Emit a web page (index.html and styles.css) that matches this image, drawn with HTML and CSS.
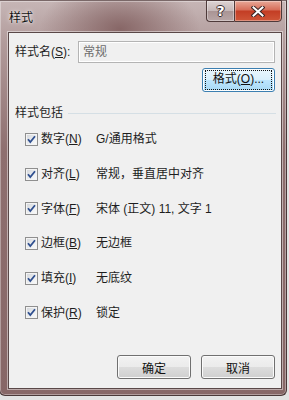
FILE: index.html
```html
<!DOCTYPE html>
<html lang="zh-CN">
<head>
    <meta charset="UTF-8">
    <meta name="viewport" content="width=device-width, initial-scale=1.0">
    <title>样式</title>
    <link rel="stylesheet" href="styles.css">
</head>
<body>
    <div class="window">
        <div class="titlebar">
            <span class="title">样式</span>
            <div class="caption">
                <span class="cap-btn help">?</span>
                <span class="cap-btn close">
                    <svg width="14" height="11" viewBox="0 0 14 11">
                        <path d="M2.5 1.5 L11.5 9.5 M11.5 1.5 L2.5 9.5" stroke="#3a2626" stroke-width="4" stroke-linecap="square"/>
                        <path d="M2.5 1.5 L11.5 9.5 M11.5 1.5 L2.5 9.5" stroke="#fff" stroke-width="2" stroke-linecap="square"/>
                    </svg>
                </span>
            </div>
        </div>
        <div class="client">
            <div class="name-row">
                <span class="name-label">样式名(<u>S</u>):</span>
                <div class="name-input">常规</div>
            </div>
            <div class="format-row">
                <button class="button focused"><span class="focus-ring">格式(<u>O</u>)...</span></button>
            </div>
            <div class="group-head">
                <span>样式包括</span>
                <span class="rule"></span>
            </div>
            <ul class="items">
                <li class="item">
                    <span class="check"><svg width="11" height="11" viewBox="0 0 11 11"><path d="M2 5.2 L4.3 8 L9 2.3" fill="none" stroke="#2f4f8f" stroke-width="1.8"/></svg></span>
                    <span class="item-name">数字(<u>N</u>)</span>
                    <span class="item-value">G/通用格式</span>
                </li>
                <li class="item">
                    <span class="check"><svg width="11" height="11" viewBox="0 0 11 11"><path d="M2 5.2 L4.3 8 L9 2.3" fill="none" stroke="#2f4f8f" stroke-width="1.8"/></svg></span>
                    <span class="item-name">对齐(<u>L</u>)</span>
                    <span class="item-value">常规，垂直居中对齐</span>
                </li>
                <li class="item">
                    <span class="check"><svg width="11" height="11" viewBox="0 0 11 11"><path d="M2 5.2 L4.3 8 L9 2.3" fill="none" stroke="#2f4f8f" stroke-width="1.8"/></svg></span>
                    <span class="item-name">字体(<u>F</u>)</span>
                    <span class="item-value">宋体 (正文) 11, 文字 1</span>
                </li>
                <li class="item">
                    <span class="check"><svg width="11" height="11" viewBox="0 0 11 11"><path d="M2 5.2 L4.3 8 L9 2.3" fill="none" stroke="#2f4f8f" stroke-width="1.8"/></svg></span>
                    <span class="item-name">边框(<u>B</u>)</span>
                    <span class="item-value">无边框</span>
                </li>
                <li class="item">
                    <span class="check"><svg width="11" height="11" viewBox="0 0 11 11"><path d="M2 5.2 L4.3 8 L9 2.3" fill="none" stroke="#2f4f8f" stroke-width="1.8"/></svg></span>
                    <span class="item-name">填充(<u>I</u>)</span>
                    <span class="item-value">无底纹</span>
                </li>
                <li class="item">
                    <span class="check"><svg width="11" height="11" viewBox="0 0 11 11"><path d="M2 5.2 L4.3 8 L9 2.3" fill="none" stroke="#2f4f8f" stroke-width="1.8"/></svg></span>
                    <span class="item-name">保护(<u>R</u>)</span>
                    <span class="item-value">锁定</span>
                </li>
            </ul>
            <div class="actions">
                <button class="button">确定</button>
                <button class="button">取消</button>
            </div>
        </div>
    </div>
</body>
</html>
```

FILE: styles.css
```css
body {
    margin: 0;
    background: #e2e2e2;
    font-family: "Liberation Sans", "Noto Sans CJK SC", sans-serif;
    font-size: 12px;
    line-height: 16px;
    color: #1e1e1e;
    overflow: hidden;
}
.window {
    margin-left: -1px;
    width: 286px;
    height: 394px;
    border: 1px solid #4a3838;
    border-top-color: #7a6868;
    border-radius: 0 0 6px 6px;
    background:
        radial-gradient(ellipse 80px 50px at 120px 28px, rgba(130, 96, 96, 0.9) 0%, rgba(130, 96, 96, 0) 100%),
        linear-gradient(to bottom, #c6b6b6 0, #b29c9c 40px, #8e6f6f 150px, #876767 100%);
    box-shadow: inset 0 0 0 1px rgba(255, 255, 255, 0.35);
    display: flex;
    flex-direction: column;
}
.titlebar {
    height: 31px;
    display: flex;
    align-items: flex-start;
    justify-content: space-between;
}
.title {
    padding: 9px 0 0 9px;
    color: #111;
    text-shadow: 0 0 5px rgba(255, 255, 255, 0.9), 0 0 2px rgba(255, 255, 255, 0.8);
}
.caption {
    display: flex;
    margin-top: -1px;
    margin-right: 4px;
}
.cap-btn {
    height: 22px;
    box-sizing: border-box;
    border: 1px solid #4e3a3a;
    display: flex;
    align-items: center;
    justify-content: center;
    box-shadow: inset 0 0 0 1px rgba(255, 255, 255, 0.35);
}
.help {
    width: 28px;
    border-right: none;
    border-radius: 0 0 0 4px;
    background: linear-gradient(to bottom, #ddd3d3 0, #c4b6b6 50%, #a99494 50%, #b8a6a6 100%);
    color: #fff;
    font-weight: bold;
    font-size: 14px;
    font-family: "DejaVu Sans", sans-serif;
    text-shadow: -1px 0 #3a2a2a, 1px 0 #3a2a2a, 0 -1px #3a2a2a, 0 1px #3a2a2a;
}
.close {
    width: 48px;
    border-radius: 0 0 4px 0;
    background: linear-gradient(to bottom, #e8a898 0, #d66d58 45%, #c33d24 50%, #cf5638 100%);
}
.client {
    margin-left: 8px;
    margin-right: 4px;
    height: 355px;
    background: #f0f0f0;
    border: 1px solid #5a4848;
    box-shadow: 0 0 0 1px rgba(255, 255, 255, 0.45);
    display: flex;
    flex-direction: column;
}
.name-row {
    margin-top: 8px;
    padding-left: 6px;
    height: 22px;
    display: flex;
    align-items: center;
}
.name-label {
    width: 63px;
}
.name-input {
    width: 197px;
    height: 22px;
    box-sizing: border-box;
    border: 1px solid #b4b4b4;
    box-shadow: inset 0 0 0 1px #fff;
    background: #f0f0f0;
    color: #6d6d6d;
    padding-left: 4px;
    line-height: 20px;
}
.format-row {
    margin-top: 5px;
    padding-right: 6px;
    display: flex;
    justify-content: flex-end;
}
.button {
    width: 74px;
    height: 24px;
    padding: 0;
    border: 1px solid #707070;
    border-radius: 3px;
    background: linear-gradient(to bottom, #f2f2f2 0, #ebebeb 50%, #dddddd 50%, #cfcfcf 100%);
    box-shadow: inset 0 0 0 1px #fbfbfb;
    font-family: inherit;
    font-size: 12px;
    color: #111;
}
.button.focused {
    width: 73px;
    border-color: #3c7fb1;
    background: linear-gradient(to bottom, #eaf6fd 0, #d9f0fc 50%, #bee6fd 50%, #a7d9f5 100%);
    box-shadow: inset 0 0 0 1px #fcfeff;
}
.focus-ring {
    display: block;
    margin: 0 2px;
    height: 18px;
    line-height: 16px;
    border: 1px dotted #111;
}
.group-head {
    margin-top: 13px;
    padding: 0 5px 0 6px;
    height: 16px;
    display: flex;
    align-items: center;
}
.rule {
    flex: 1;
    height: 1px;
    margin-left: 5px;
    background: #d5dfe5;
}
.items {
    list-style: none;
    margin: 1px 0 0;
    padding: 0;
}
.item {
    height: 34.7px;
    padding-left: 16px;
    display: flex;
    align-items: center;
}
.check {
    width: 13px;
    height: 13px;
    box-sizing: border-box;
    border: 1px solid #8f8f8f;
    background: linear-gradient(135deg, #d0d3d8 0, #eef0f2 60%, #fafafa 100%);
    box-shadow: inset 0 0 0 1px #f4f4f4;
    display: flex;
    align-items: center;
    justify-content: center;
    margin-right: 3px;
}
.item-name {
    width: 55px;
}
.actions {
    margin-top: auto;
    padding: 0 6px 9px 0;
    display: flex;
    justify-content: flex-end;
    gap: 10px;
}
```
